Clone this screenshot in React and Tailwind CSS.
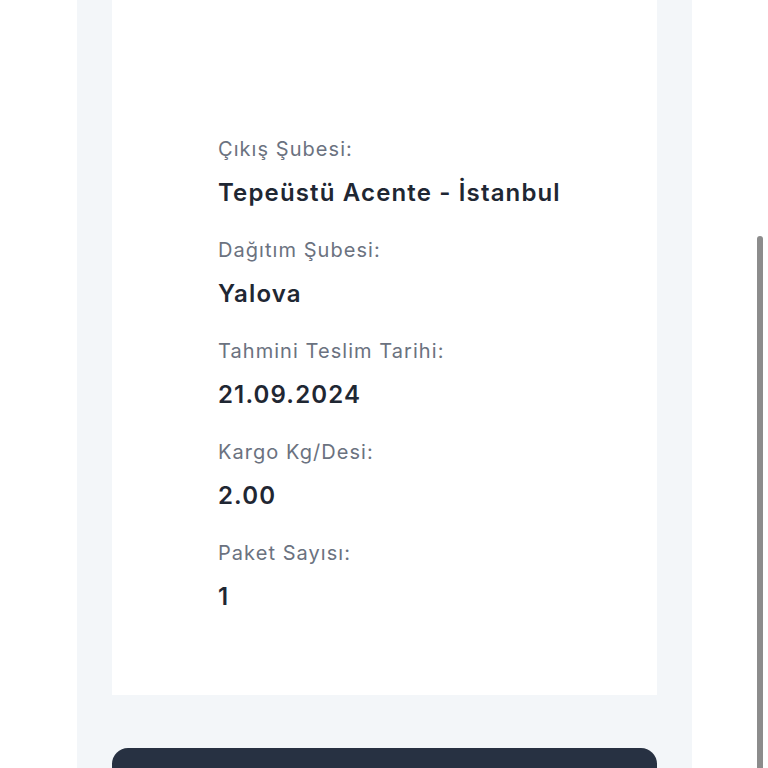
import React from "react";

const details = [
  { label: "Çıkış Şubesi:", value: "Tepeüstü Acente - İstanbul" },
  { label: "Dağıtım Şubesi:", value: "Yalova" },
  { label: "Tahmini Teslim Tarihi:", value: "21.09.2024" },
  { label: "Kargo Kg/Desi:", value: "2.00" },
  { label: "Paket Sayısı:", value: "1" },
];

const App = () => {
  return (
    <div className="relative w-[768px] h-[768px] overflow-hidden bg-white" style={{ fontFamily: "Inter, 'Noto Sans', sans-serif" }}>
      <div className="ml-[77px] w-[615px] h-[768px] bg-[#f3f6f9] px-[35px]">
        {/* Shipment details card */}
        <div className="h-[695px] bg-white pl-[106px] pt-[135px] flex flex-col gap-[27px]">
          {details.map((item) => (
            <div key={item.label} className="flex flex-col">
              <span className="text-[20px] leading-[28px] tracking-[1.05px] text-[#6b7280]">{item.label}</span>
              <span className="mt-[14px] text-[24px] leading-[32px] tracking-[1.15px] font-semibold text-[#1f2733]">{item.value}</span>
            </div>
          ))}
        </div>

        {/* Dark action card */}
        <div className="mt-[53px] h-[60px] rounded-[16px] bg-[#273142]"></div>
      </div>

      {/* Scrollbar */}
      <div className="absolute left-[757px] top-[236px] w-[6px] h-[540px] rounded-t-full bg-[#8c8c8c]"></div>
    </div>
  );
};

export default App;
